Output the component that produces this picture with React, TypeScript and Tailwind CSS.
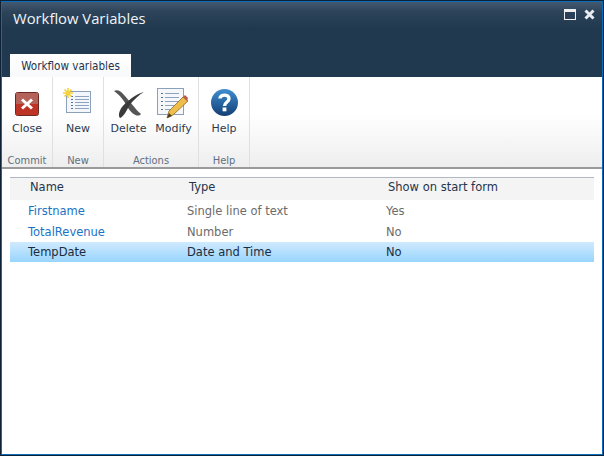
export default function App() {
  const lines = (x: number, ys: number[], w: number) =>
    ys.map((y) => (
      <g key={y}>
        <rect x={x} y={y} width={2} height={1} fill="#5a6f8c" />
        <rect x={x + 4} y={y} width={w} height={1} fill="#8ea3bd" />
      </g>
    ));
  const Btn = ({ label, w, children }: { label: string; w: string; children: React.ReactNode }) => (
    <div className={`flex flex-col items-center ${w}`}>
      <div className="h-[32px] w-[32px]">{children}</div>
      <div className="mt-[2px] text-[11px] leading-[14px] text-[#2b3a50]">{label}</div>
    </div>
  );
  const Group = ({ label, w, children }: { label: string; w: string; children: React.ReactNode }) => (
    <div className={`flex h-full flex-col border-r border-[#e0e0e0] ${w}`}>
      <div className="flex flex-1 justify-center pt-[11px]">{children}</div>
      <div className="relative top-[1px] text-center font-['DejaVu_Sans_Condensed',sans-serif] text-[11px] leading-[14px] text-[#5f6f80]">
        {label}
      </div>
    </div>
  );
  return (
    <div className="h-[456px] w-[604px] overflow-hidden bg-[#0d2236] p-[1px] font-['DejaVu_Sans',sans-serif]">
      <div className="flex h-full flex-col border border-[#0a6dba] bg-white">
        <div className="relative h-[75px] bg-[#20384f] bg-[linear-gradient(#43596f_0px,#2c435a_10px,#21394f_26px,#21394f_100%)]">
          <div className="absolute left-[11px] top-[5px] font-['Open_Sans',sans-serif] text-[14.8px] leading-[22px] text-[#f0f4f8]">
            Workflow Variables
          </div>
          <div className="absolute right-[26px] top-[7px] h-[11px] w-[12px] border border-[#f0f0f0] border-t-[3px] bg-[#2a4058]" />
          <svg className="absolute right-[7px] top-[7px]" width="11" height="11" viewBox="0 0 11 11">
            <path d="M1.5 1.5 L9.5 9.5 M9.5 1.5 L1.5 9.5" stroke="#e8ecf0" strokeWidth="3" />
          </svg>
          <div className="absolute bottom-0 left-[8px] flex h-[23px] w-[121px] items-center justify-center bg-white bg-[linear-gradient(#ffffff,#f8f9fa)] pt-[2px] font-['DejaVu_Sans_Condensed',sans-serif] text-[11.6px] text-[#23334d]">
            Workflow variables
          </div>
        </div>
        <div className="flex h-[92px] shrink-0 border-b-2 border-[#9a9a9a] bg-[linear-gradient(#ffffff_40%,#eeeeee_100%)]">
          <Group label="Commit" w="w-[51px]">
            <Btn label="Close" w="w-[48px]">
              <svg width="32" height="32" viewBox="0 0 32 32">
                <rect x="4.5" y="4.5" width="23" height="23" rx="2" fill="#c8483c" stroke="#6b2a24" />
                <rect x="5" y="5" width="22" height="11" fill="#b4635a" />
                <rect x="5" y="16" width="22" height="11" fill="#bd3325" />
                <path d="M11 11.5 L21 20.5 M21 11.5 L11 20.5" stroke="#fff" strokeWidth="3" />
              </svg>
            </Btn>
          </Group>
          <Group label="New" w="w-[51px]">
            <Btn label="New" w="w-[48px]">
              <svg width="32" height="32" viewBox="0 0 32 32">
                <rect x="4.5" y="3.5" width="24" height="21" fill="#f3f6fa" stroke="#8ba0ba" />
                {lines(9, [8, 11, 14, 17, 20], 14)}
                <path d="M6 0 L6 10 M1 5 L11 5 M2.5 1.5 L9.5 8.5 M9.5 1.5 L2.5 8.5" stroke="#f5d23c" strokeWidth="1.6" />
              </svg>
            </Btn>
          </Group>
          <Group label="Actions" w="w-[95px]">
            <Btn label="Delete" w="w-[45px]">
              <svg width="32" height="32" viewBox="0 0 32 32">
                <path d="M1 3 C4 1 8 3 11 7 C16 12 22 21 28 26 C25 30 19 26 15 20 C12 14 7 7 1 3 Z" fill="#555" />
                <path d="M31 4 C23 6 14 13 9 19 C6 23 5 28 7 30 C10 29 13 24 16 18 C20 12 26 7 31 4 Z" fill="#3a3a3a" />
              </svg>
            </Btn>
            <Btn label="Modify" w="w-[45px]">
              <svg width="32" height="32" viewBox="0 0 32 32" className="-ml-[2px]">
                <rect x="1.5" y="0.5" width="26" height="26" fill="#f5f7fa" stroke="#8ba0ba" />
                {lines(5, [5, 9, 13, 17, 21], 14)}
                <path d="M11 30 L13 23 L27 9 L32 13 L17 27 Z" fill="#eebd4a" stroke="#8a6a28" strokeWidth="0.8" />
                <path d="M11 30 L13 25 L16 28 Z" fill="#4a3a20" />
                <path d="M27 9 L29 7 L32 10 L31 13 Z" fill="#c0574c" />
              </svg>
            </Btn>
          </Group>
          <Group label="Help" w="w-[51px]">
            <Btn label="Help" w="w-[48px]">
              <svg width="32" height="32" viewBox="0 0 32 32">
                <defs>
                  <linearGradient id="h" x1="0" y1="0" x2="0" y2="1">
                    <stop offset="0" stopColor="#3f8ed0" />
                    <stop offset="1" stopColor="#123f74" />
                  </linearGradient>
                </defs>
                <circle cx="16.5" cy="14.5" r="13.5" fill="url(#h)" />
                <path d="M12 10.5 C12 6 21 6 21 10.5 C21 14.5 16.5 14 16.5 18" fill="none" stroke="#fff" strokeWidth="3.4" />
                <rect x="14.6" y="19.5" width="3.8" height="3.8" fill="#fff" />
              </svg>
            </Btn>
          </Group>
        </div>
        <div className="px-[8px] pt-[8px] text-[11.5px]">
          <div className="flex h-[23px] items-center border-t border-[#b0b8c4] bg-[#f4f4f4] pb-[3px] text-[#24344c]">
            <div className="w-[179px] pl-[20px]">Name</div>
            <div className="w-[199px]">Type</div>
            <div>Show on start form</div>
          </div>
          <div className="flex h-[21px] items-center pt-[2px] text-[#6b6b6b]">
            <div className="w-[177px] pl-[18px] text-[#1a73c4]">Firstname</div>
            <div className="w-[199px]">Single line of text</div>
            <div>Yes</div>
          </div>
          <div className="flex h-[21px] items-center pt-[2px] text-[#6b6b6b]">
            <div className="w-[177px] pl-[18px] text-[#1a73c4]">TotalRevenue</div>
            <div className="w-[199px]">Number</div>
            <div>No</div>
          </div>
          <div className="flex h-[20px] items-center bg-[linear-gradient(#cfeafe,#98d5fd)] pt-[1px] text-[#1c2c40]">
            <div className="w-[177px] pl-[18px]">TempDate</div>
            <div className="w-[199px]">Date and Time</div>
            <div>No</div>
          </div>
        </div>
      </div>
    </div>
  );
}
